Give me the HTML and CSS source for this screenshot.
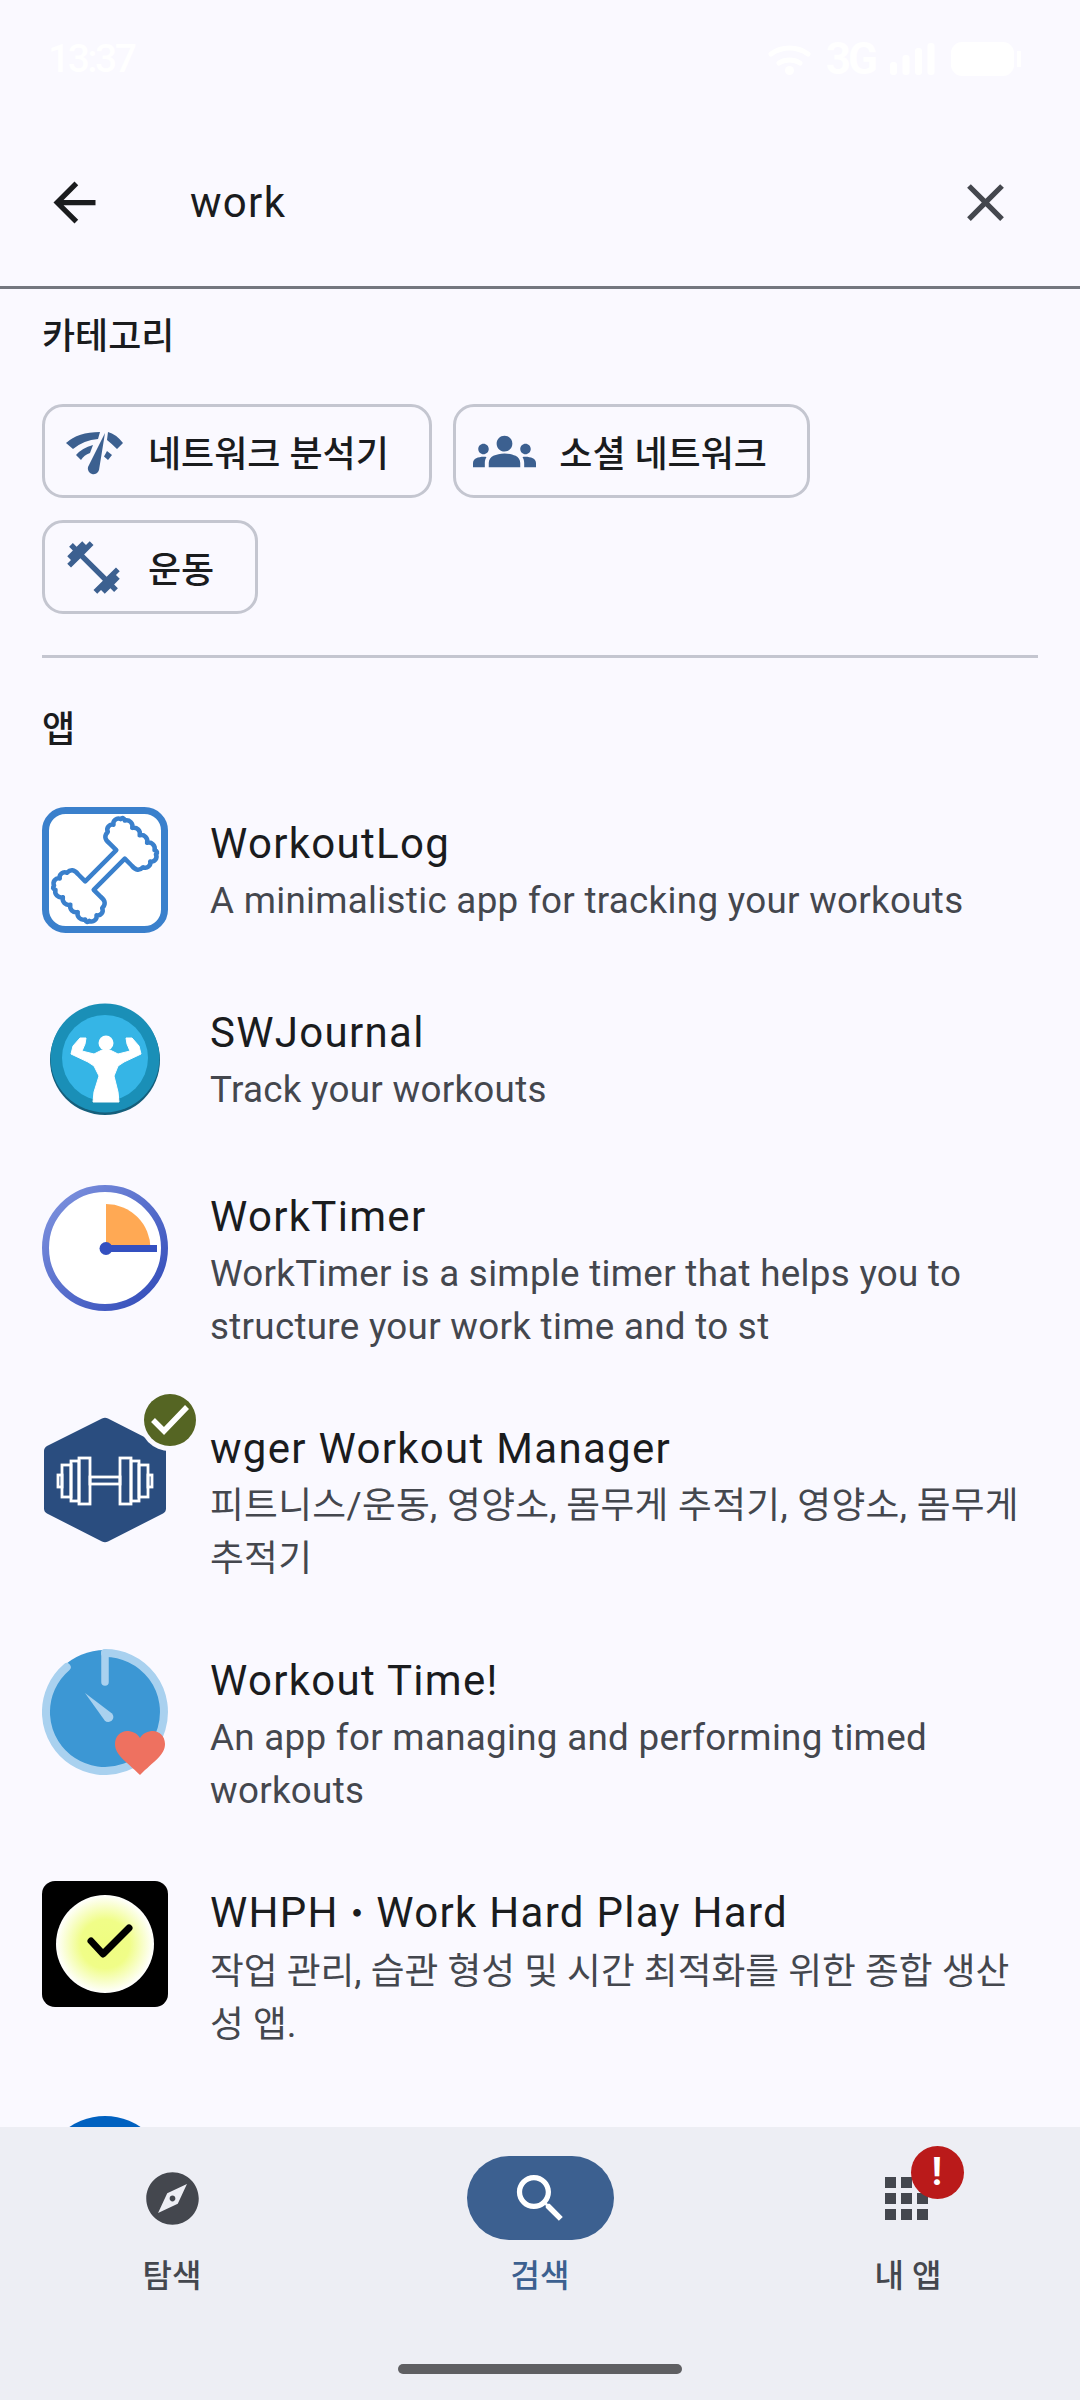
FILE: index.html
```html
<!DOCTYPE html>
<html lang="ko">

<head>
  <meta charset="utf8">
  <title>검색</title>
  <link rel="stylesheet" href="styles.css">
</head>

<body>
  <div class="pantalla">

    <!-- Barra de estado -->
    <div class="estado">
      <span class="hora">13:37</span>
      <div class="estado-iconos">
        <svg width="43" height="32" viewBox="0 0 43 32" fill="none" stroke="#fff" stroke-linecap="round"><path d="M3 11c11-8 26-8 37 0M11 20c6-4 15-4 21 0" stroke-width="5"/><circle cx="21.500" cy="27.500" r="4.500" fill="#fff" stroke="none"/></svg>
        <span class="red">3G</span>
        <svg width="46" height="32" viewBox="0 0 46 32" fill="#fff"><rect x="0" y="19" width="7" height="13" rx="3"/><rect x="12.500" y="12" width="7" height="20" rx="3"/><rect x="25" y="5" width="7" height="27" rx="3"/><rect x="37.500" y="0" width="7" height="32" rx="3"/></svg>
        <div class="bateria"><span class="bateria-punta"></span></div>
      </div>
    </div>

    <!-- Barra de busqueda -->
    <div class="busqueda">
      <svg width="63" height="63" viewBox="0 0 24 24" fill="#1a1c1e"><path d="M20 11H7.830l5.590-5.590L12 4l-8 8 8 8 1.410-1.410L7.830 13H20v-2z"/></svg>
      <span class="busqueda-texto">work</span>
      <svg width="63" height="63" viewBox="0 0 24 24" fill="#44474e"><path d="M19 6.410L17.590 5 12 10.590 6.410 5 5 6.410 10.590 12 5 17.590 6.410 19 12 13.410 17.590 19 19 17.590 13.410 12z"/></svg>
    </div>

    <div class="contenido">
      <h2 class="seccion">카테고리</h2>
      <div class="chips">
        <div class="chip">
          <svg width="63" height="63" viewBox="0 0 63 63" fill="#3c6090"><path d="M4 23Q16 12 38 12L36 19Q22 20 11 29z"/><path d="M46 12Q54 14 61 23L55 29Q50 24 45 20z"/><path d="M14 35Q20 28 31 25L28 33Q22 35 19 40z"/><path d="M45 31L50 35 46 40 42 36.500z"/><path d="M43 13L37 50A5.500 5.500 0 0 1 26 47z"/></svg>
          <span>네트워크 분석기</span>
        </div>
        <div class="chip">
          <svg width="63" height="63" viewBox="0 0 24 24" fill="#3c6090"><path d="M12 12.750c1.630 0 3.070.390 4.240.900 1.080.480 1.760 1.560 1.760 2.730V18H6v-1.610c0-1.180.680-2.260 1.760-2.730 1.170-.520 2.610-.910 4.240-.910zM4 13c1.100 0 2-.900 2-2s-.900-2-2-2-2 .900-2 2 .900 2 2 2zm1.130 1.100c-.370-.060-.740-.100-1.130-.100-.990 0-1.930.210-2.780.580C.480 14.900 0 15.620 0 16.430V18h4.500v-1.610c0-.830.230-1.610.630-2.290zM20 13c1.100 0 2-.900 2-2s-.900-2-2-2-2 .900-2 2 .900 2 2 2zm4 3.430c0-.810-.480-1.530-1.220-1.850-.850-.370-1.790-.580-2.780-.580-.390 0-.760.040-1.130.100.400.680.630 1.460.630 2.290V18H24v-1.570zM12 6c1.660 0 3 1.340 3 3s-1.340 3-3 3-3-1.340-3-3 1.340-3 3-3z"/></svg>
          <span>소셜 네트워크</span>
        </div>
        <div class="chip">
          <svg width="63" height="63" viewBox="0 0 24 24" fill="#3c6090"><path d="M20.570 14.860L22 13.430 20.570 12 17 15.570 8.430 7 12 3.430 10.570 2 9.140 3.430 7.710 2 5.570 4.140 4.140 2.710 2.710 4.140l1.430 1.430L2 7.710l1.430 1.430L2 10.570 3.430 12 7 8.430 15.570 17 12 20.570 13.430 22l1.430-1.430L16.290 22l2.140-2.140 1.430 1.430 1.430-1.430-1.430-1.430L22 16.290z"/></svg>
          <span>운동</span>
        </div>
      </div>

      <hr class="separador">

      <h2 class="seccion seccion-apps">앱</h2>

      <ul class="lista">
        <li class="app">
          <svg class="app-icono" width="126" height="126" viewBox="0 0 126 126">
            <rect x="3.500" y="3.500" width="119" height="119" rx="20" fill="#fff" stroke="#3a80cc" stroke-width="7"/>
            <path transform="translate(63 63) rotate(-45)" d="M-22-6H22V-16Q21-25 29-25a5 5 0 0 1 9-1a5 5 0 0 1 9 1Q51-25 49-21a6 6 0 0 1 0 10.500a6 6 0 0 1 0 10.500a6 6 0 0 1 0 10.500a6 6 0 0 1 0 10.500Q51 25 47 25a5 5 0 0 1-9 1a5 5 0 0 1-9-1Q21 25 22 16V6H-22V16Q-21 25-29 25a5 5 0 0 1-9 1a5 5 0 0 1-9-1Q-51 25-49 21a6 6 0 0 1 0-10.500a6 6 0 0 1 0-10.500a6 6 0 0 1 0-10.500a6 6 0 0 1 0-10.500Q-51-25-47-25a5 5 0 0 1 9-1a5 5 0 0 1 9 1Q-21-25-22-16V-6z" fill="#fff" stroke="#3a80cc" stroke-width="4.500" stroke-linejoin="round"/>
          </svg>
          <div class="app-info">
            <div class="app-titulo">WorkoutLog</div>
            <div class="app-desc">A minimalistic app for tracking your workouts</div>
          </div>
        </li>
        <li class="app">
          <svg class="app-icono" width="126" height="126" viewBox="0 0 126 126">
            <circle cx="63" cy="64" r="55" fill="#155f7c"/>
            <circle cx="63" cy="62" r="54.500" fill="#1a8fb7"/>
            <circle cx="63" cy="62" r="43" fill="#35b5e6"/>
            <circle cx="64" cy="47" r="7.500" fill="#fff"/>
            <path d="M60 54L52 58 40 55 43 48 44 42 38 42 31 50 29 58 46 66 52 70 57 80 52 96 51 106H77L76 96 72 80 76 70 82 66 99 58 97 50 90 42 84 42 85 48 88 55 76 58 68 54z" fill="#fff" stroke="#fff" stroke-linejoin="round"/>
          </svg>
          <div class="app-info">
            <div class="app-titulo">SWJournal</div>
            <div class="app-desc">Track your workouts</div>
          </div>
        </li>
        <li class="app">
          <svg class="app-icono" width="126" height="126" viewBox="0 0 126 126">
            <defs>
              <linearGradient id="aro" x1="0" y1="0" x2="1" y2="1">
                <stop offset="0" stop-color="#8195e0"/>
                <stop offset="1" stop-color="#2f49b8"/>
              </linearGradient>
            </defs>
            <circle cx="63" cy="63" r="59.500" fill="#fff" stroke="url(#aro)" stroke-width="7"/>
            <path d="M64 63.500V19a44.500 44.500 0 0 1 44.500 44.500z" fill="#ffa954"/>
            <path d="M64 63.500h51" stroke="#3450c0" stroke-width="7"/>
            <circle cx="64" cy="63.500" r="6.500" fill="#3450c0"/>
          </svg>
          <div class="app-info">
            <div class="app-titulo">WorkTimer</div>
            <div class="app-desc">WorkTimer is a simple timer that helps you to structure your work time and to st</div>
          </div>
        </li>
        <li class="app">
          <div class="app-icono-caja">
            <svg class="app-icono" width="126" height="126" viewBox="0 0 126 126">
              <path d="M60 1.500c2-1 4-1 6 0l55 28c2 1 3 3 3 5v57c0 2-1 4-3 5l-55 28c-2 1-4 1-6 0l-55-28c-2-1-3-3-3-5V34c0-2 1-4 3-5z" fill="#2a4d7f"/>
              <g fill="none" stroke="#fff" stroke-width="2.800">
                <rect x="16" y="58" width="4" height="12"/>
                <rect x="20" y="48" width="9" height="32"/>
                <rect x="29" y="44" width="8" height="40"/>
                <rect x="37" y="41" width="11" height="46"/>
                <rect x="48" y="60" width="30" height="7"/>
                <rect x="78" y="41" width="11" height="46"/>
                <rect x="89" y="44" width="8" height="40"/>
                <rect x="97" y="48" width="9" height="32"/>
                <rect x="106" y="58" width="4" height="12"/>
              </g>
            </svg>
            <span class="insignia-ok">
              <svg width="44" height="44" viewBox="0 0 44 44"><path d="M5 22l11 11L39 9" fill="none" stroke="#fff" stroke-width="5.500"/></svg>
            </span>
          </div>
          <div class="app-info">
            <div class="app-titulo">wger Workout Manager</div>
            <div class="app-desc">피트니스/운동, 영양소, 몸무게 추적기, 영양소, 몸무게 추적기</div>
          </div>
        </li>
        <li class="app">
          <svg class="app-icono" width="126" height="126" viewBox="0 0 126 126">
            <circle cx="63" cy="63" r="62" fill="#3c97d4"/>
            <path d="M63 4A59 59 0 1 1 24.700 18.100" fill="none" stroke="#a9d1ef" stroke-width="8" stroke-linecap="round"/>
            <path d="M63 4V33" stroke="#a9d1ef" stroke-width="7.500" stroke-linecap="round"/>
            <path d="M43 44L70 64.500A5 5 0 0 1 62.700 71.400z" fill="#a9d1ef"/>
            <path d="M98 126C84 112 73 106 73 95C73 87 79 82 85 82C90 82 95 84 98 89C101 84 106 82 111 82C117 82 123 87 123 95C123 106 112 112 98 126z" fill="#ee7160"/>
          </svg>
          <div class="app-info">
            <div class="app-titulo">Workout Time!</div>
            <div class="app-desc">An app for managing and performing timed workouts</div>
          </div>
        </li>
        <li class="app">
          <svg class="app-icono" width="126" height="126" viewBox="0 0 126 126">
            <defs>
              <radialGradient id="brillo">
                <stop offset="0" stop-color="#effd80"/>
                <stop offset=".5" stop-color="#f0fd88"/>
                <stop offset="1" stop-color="#fff"/>
              </radialGradient>
            </defs>
            <rect width="126" height="126" rx="13" fill="#000"/>
            <circle cx="63" cy="63" r="49" fill="url(#brillo)"/>
            <path d="M49 60l12 13 26-26" fill="none" stroke="#000" stroke-width="7" stroke-linecap="round" stroke-linejoin="round"/>
          </svg>
          <div class="app-info">
            <div class="app-titulo">WHPH<span class="punto">・</span>Work Hard Play Hard</div>
            <div class="app-desc app-desc-justa">작업 관리, 습관 형성 및 시간 최적화를 위한 종합 생산성 앱.</div>
          </div>
        </li>
        <li class="app">
          <svg class="app-icono" width="126" height="126" viewBox="0 0 126 126"><circle cx="63" cy="64" r="63" fill="#0061c0"/></svg>
        </li>
      </ul>
    </div>

    <!-- Navegacion inferior -->
    <nav class="nav">
      <div class="nav-items">
        <div class="nav-item">
          <div class="nav-icono">
            <svg width="63" height="63" viewBox="0 0 24 24" fill="#44474e" fill-rule="evenodd"><path d="M12 2C6.480 2 2 6.480 2 12s4.480 10 10 10 10-4.480 10-10S17.520 2 12 2zm-5.500 15.500l7.510-3.490L17.500 6.500 9.990 9.990 6.500 17.500zm5.500-6.600c.610 0 1.100.490 1.100 1.100s-.490 1.100-1.100 1.100-1.100-.490-1.100-1.100.490-1.100 1.100-1.100z"/></svg>
          </div>
          <span>탐색</span>
        </div>
        <div class="nav-item nav-activo">
          <div class="nav-icono">
            <svg width="63" height="63" viewBox="0 0 24 24" fill="#fff"><path d="M15.500 14h-.790l-.280-.270C15.410 12.590 16 11.110 16 9.500 16 5.910 13.090 3 9.500 3S3 5.910 3 9.500 5.910 16 9.500 16c1.610 0 3.090-.590 4.230-1.570l.270.280v.790l5 4.990L20.490 19l-4.990-5zm-6 0C7.010 14 5 11.990 5 9.500S7.010 5 9.500 5 14 7.010 14 9.500 11.990 14 9.500 14z"/></svg>
          </div>
          <span>검색</span>
        </div>
        <div class="nav-item">
          <div class="nav-icono">
            <svg class="icono-apps" width="43" height="43" viewBox="0 0 43 43" fill="#44474e"><rect x="0" y="0" width="11" height="11"/><rect x="16" y="0" width="11" height="11"/><rect x="32" y="0" width="11" height="11"/><rect x="0" y="16" width="11" height="11"/><rect x="16" y="16" width="11" height="11"/><rect x="32" y="16" width="11" height="11"/><rect x="0" y="32" width="11" height="11"/><rect x="16" y="32" width="11" height="11"/><rect x="32" y="32" width="11" height="11"/></svg>
            <span class="insignia-alerta">!</span>
          </div>
          <span>내 앱</span>
        </div>
      </div>
      <div class="barra-inicio"></div>
    </nav>
  </div>
</body>

</html>
```

FILE: styles.css
```css
/* Estilos generales */
* {
  box-sizing: border-box;
}

body {
  margin: 0;
  background-color: #faf9ff;
  color: #1a1c1e;
  font-family: Roboto, "Noto Sans CJK KR", sans-serif;
}

.pantalla {
  display: flex;
  flex-direction: column;
  height: 2400px;
  overflow: hidden;
}

/* Barra de estado */
.estado {
  display: flex;
  flex-shrink: 0;
  align-items: center;
  justify-content: space-between;
  height: 118px;
  padding: 0 66px 0 48px;
  color: #fff;
}

.hora {
  font-size: 39px;
  font-weight: 500;
  letter-spacing: -2.5px;
}

.estado-iconos {
  display: flex;
  align-items: center;
  gap: 15px;
}

.red {
  font-size: 44px;
  font-weight: 700;
  letter-spacing: -3px;
}

.bateria {
  position: relative;
  width: 63px;
  height: 34px;
  border-radius: 11px;
  background-color: #fff;
}

.bateria-punta {
  position: absolute;
  top: 9px;
  right: -7px;
  width: 4px;
  height: 16px;
  background-color: #fff;
}

/* Barra de busqueda */
.busqueda {
  display: flex;
  flex-shrink: 0;
  align-items: center;
  height: 171px;
  padding: 0 63px 0 43px;
  border-bottom: 3px solid #74777f;
}

.busqueda-texto {
  flex: 1;
  margin-left: 84px;
  font-size: 42px;
  letter-spacing: 1.3px;
}

/* Contenido */
.contenido {
  flex: 1;
  min-height: 0;
  overflow: hidden;
  padding-top: 22px;
}

.seccion {
  margin: 0 42px;
  font-size: 36px;
  font-weight: 500;
  line-height: 52px;
}

/* Chips de categorias */
.chips {
  display: flex;
  flex-wrap: wrap;
  gap: 22px 21px;
  margin: 41px 42px 0;
}

.chip {
  display: flex;
  align-items: center;
  gap: 23px;
  height: 94px;
  padding: 0 40.5px 0 17px;
  border: 3px solid #c4c6d0;
  border-radius: 21px;
  font-size: 36px;
  font-weight: 500;
}

.separador {
  height: 3px;
  margin: 41px 42px 0;
  border: 0;
  background-color: #c4c6d0;
}

.seccion-apps {
  margin-top: 46px;
}

/* Lista de aplicaciones */
.lista {
  margin: 19px 0 0;
  padding: 0;
  list-style: none;
}

.app {
  display: flex;
  align-items: center;
  gap: 42px;
  min-height: 189px;
  padding: 31.5px 42px;
}

.app-icono {
  display: block;
  flex-shrink: 0;
  align-self: flex-start;
}

.app-icono-caja {
  position: relative;
  flex-shrink: 0;
  align-self: flex-start;
}

.app-info {
  flex: 1;
  min-width: 0;
  padding-top: 2px;
}

.app-titulo {
  font-size: 42px;
  line-height: 60px;
  letter-spacing: 1.3px;
}

.punto {
  font-size: 36px;
}

.app-desc {
  color: #44474e;
  font-size: 36.750px;
  line-height: 53.5px;
  letter-spacing: 0.3px;
}

.app-desc-justa {
  letter-spacing: 0;
}

/* La insignia recorta el icono con un anillo del color del fondo */
.insignia-ok {
  position: absolute;
  top: -23px;
  right: -28px;
  display: flex;
  align-items: center;
  justify-content: center;
  width: 52px;
  height: 52px;
  border-radius: 50%;
  background-color: #556523;
  box-shadow: 0 0 0 5px #faf9ff;
}

/* Navegacion inferior */
.nav {
  display: flex;
  flex-direction: column;
  flex-shrink: 0;
  height: 273px;
  background-color: #edeef4;
}

.nav-items {
  display: grid;
  grid-template-columns: repeat(3, 368px);
  justify-content: center;
  padding-top: 29px;
}

.nav-item {
  display: flex;
  flex-direction: column;
  align-items: center;
  gap: 16px;
  color: #44474e;
  font-size: 32px;
  font-weight: 500;
  line-height: 40px;
}

.nav-icono {
  position: relative;
  display: flex;
  align-items: center;
  justify-content: center;
  width: 147px;
  height: 84px;
  border-radius: 42px;
}

.nav-activo {
  color: #3c6090;
}

.nav-activo .nav-icono {
  background-color: #3c6090;
}

.icono-apps {
  margin-left: -3px;
}

.insignia-alerta {
  position: absolute;
  top: -10px;
  right: 18px;
  width: 53px;
  height: 53px;
  border-radius: 50%;
  background-color: #ba1a1a;
  color: #fff;
  font-size: 38px;
  font-weight: 700;
  line-height: 53px;
  text-align: center;
}

.barra-inicio {
  width: 284px;
  height: 10px;
  margin: auto auto 26px;
  border-radius: 5px;
  background-color: #5f5f62;
}
```
